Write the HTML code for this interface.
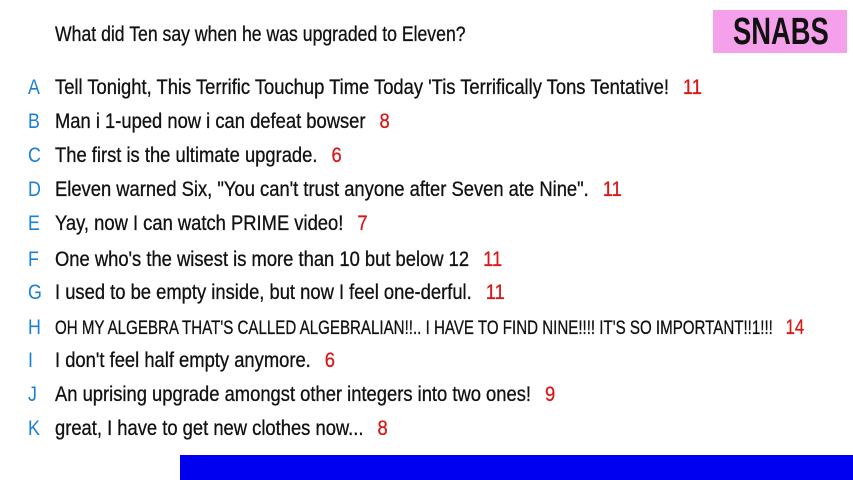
<html><head><style>
body{margin:0;width:853px;height:480px;background:#fff;position:relative;overflow:hidden;font-family:"Liberation Sans",sans-serif;color:#111}
.r{position:absolute;left:0;height:24px;line-height:24px;font-size:21px;white-space:nowrap}
.l{position:absolute;left:28px;color:#1a7fd6;display:inline-block;transform:scaleX(0.85);transform-origin:left}
.t{position:absolute;left:55px;display:inline-block;transform:scaleX(0.875);transform-origin:left;-webkit-text-stroke:0.3px #111}
.n{color:#d81818;margin-left:16px;-webkit-text-stroke:0.3px #d81818}
</style></head><body>
<div style="position:absolute;left:55px;top:22px;font-size:21px;line-height:26px;transform:scaleX(0.84);transform-origin:left;white-space:nowrap;-webkit-text-stroke:0.3px #111">What did Ten say when he was upgraded to Eleven?</div>
<div style="position:absolute;left:713px;top:10px;width:134px;height:43px;background:#f5a0ea;"><div style="position:absolute;left:20px;top:1px;font-size:38px;line-height:43px;font-weight:bold;color:#111;transform:scaleX(0.72);transform-origin:left">SNABS</div></div>
<div class="r" style="top:76px"><span class="l">A</span><span class="t">Tell Tonight, This Terrific Touchup Time Today 'Tis Terrifically Tons Tentative!<span class="n">11</span></span></div>
<div class="r" style="top:110px"><span class="l">B</span><span class="t">Man i 1-uped now i can defeat bowser<span class="n">8</span></span></div>
<div class="r" style="top:144px"><span class="l">C</span><span class="t">The first is the ultimate upgrade.<span class="n">6</span></span></div>
<div class="r" style="top:178px"><span class="l">D</span><span class="t">Eleven warned Six, "You can't trust anyone after Seven ate Nine".<span class="n">11</span></span></div>
<div class="r" style="top:212px"><span class="l">E</span><span class="t">Yay, now I can watch PRIME video!<span class="n">7</span></span></div>
<div class="r" style="top:248px"><span class="l">F</span><span class="t">One who's the wisest is more than 10 but below 12<span class="n">11</span></span></div>
<div class="r" style="top:281px"><span class="l">G</span><span class="t">I used to be empty inside, but now I feel one-derful.<span class="n">11</span></span></div>
<div class="r" style="top:316px;font-size:19px"><span class="l" style="font-size:21px">H</span><span class="t" style="transform:scaleX(0.795)">OH MY ALGEBRA THAT'S CALLED ALGEBRALIAN!!.. I HAVE TO FIND NINE!!!! IT'S SO IMPORTANT!!1!!!<span class="n" style="font-size:21px">14</span></span></div>
<div class="r" style="top:349px"><span class="l">I</span><span class="t">I don't feel half empty anymore.<span class="n">6</span></span></div>
<div class="r" style="top:383px"><span class="l">J</span><span class="t">An uprising upgrade amongst other integers into two ones!<span class="n">9</span></span></div>
<div class="r" style="top:417px"><span class="l">K</span><span class="t">great, I have to get new clothes now...<span class="n">8</span></span></div>
<div style="position:absolute;left:180px;top:455px;width:673px;height:25px;background:#0000f0"></div>
</body></html>
